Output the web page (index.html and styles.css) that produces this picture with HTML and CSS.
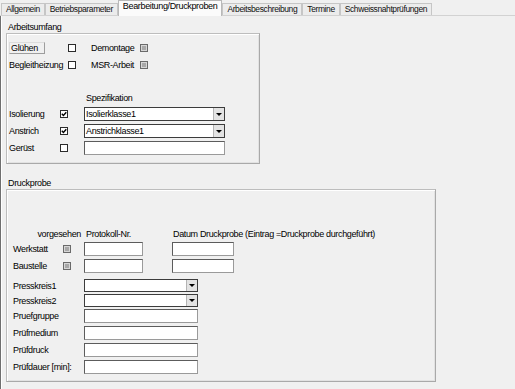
FILE: index.html
```html
<!DOCTYPE html>
<html lang="de">
<head>
<meta charset="utf-8">
<title>Bearbeitung/Druckproben</title>
<link rel="stylesheet" href="styles.css">
</head>
<body>
<div class="win">
  <div class="tabs">
    <div class="tab">Allgemein</div>
    <div class="tab">Betriebsparameter</div>
    <div class="tab sel">Bearbeitung/Druckproben</div>
    <div class="tab">Arbeitsbeschreibung</div>
    <div class="tab">Termine</div>
    <div class="tab">Schweissnahtprüfungen</div>
  </div>
  <div class="panel">
    <div class="glabel first">Arbeitsumfang</div>
    <div class="group g1">
      <div class="opts">
        <div class="lbl boxed">Glühen</div>
        <span class="cb"></span>
        <div class="lbl">Demontage</div>
        <span class="cb dis"></span>
        <div class="lbl">Begleitheizung</div>
        <span class="cb"></span>
        <div class="lbl">MSR-Arbeit</div>
        <span class="cb dis"></span>
      </div>
      <div class="spechead">Spezifikation</div>
      <div class="spec">
        <div class="lbl">Isolierung</div>
        <span class="cb on"><svg viewBox="0 0 6 6"><path d="M0.8 2.8 L2.4 4.4 L5.3 1.2" fill="none" stroke="#000" stroke-width="1.4"/></svg></span>
        <div class="combo"><span class="val">Isolierklasse1</span><span class="btn"></span></div>
        <div class="lbl">Anstrich</div>
        <span class="cb on"><svg viewBox="0 0 6 6"><path d="M0.8 2.8 L2.4 4.4 L5.3 1.2" fill="none" stroke="#000" stroke-width="1.4"/></svg></span>
        <div class="combo"><span class="val">Anstrichklasse1</span><span class="btn"></span></div>
        <div class="lbl">Gerüst</div>
        <span class="cb"></span>
        <div class="tb"></div>
      </div>
    </div>
    <div class="glabel second">Druckprobe</div>
    <div class="group g2">
      <div class="dp">
        <div class="lbl vg">vorgesehen</div>
        <div class="lbl pn">Protokoll-Nr.</div>
        <div class="lbl dt">Datum Druckprobe (Eintrag =Druckprobe durchgeführt)</div>
        <div class="lbl">Werkstatt</div>
        <span class="cb dis"></span>
        <div class="tb proto"></div>
        <div class="tb date"></div>
        <div class="lbl">Baustelle</div>
        <span class="cb dis"></span>
        <div class="tb proto"></div>
        <div class="tb date"></div>
      </div>
      <div class="frow cmbrow first"><div class="lbl">Presskreis1</div><div class="combo"><span class="val"></span><span class="btn"></span></div></div>
      <div class="frow cmbrow"><div class="lbl">Presskreis2</div><div class="combo"><span class="val"></span><span class="btn"></span></div></div>
      <div class="frow"><div class="lbl">Pruefgruppe</div><div class="tb"></div></div>
      <div class="frow"><div class="lbl">Prüfmedium</div><div class="tb"></div></div>
      <div class="frow"><div class="lbl">Prüfdruck</div><div class="tb"></div></div>
      <div class="frow"><div class="lbl">Prüfdauer [min]:</div><div class="tb"></div></div>
    </div>
  </div>
</div>
</body>
</html>
```

FILE: styles.css
```css
* { box-sizing: border-box; }
html, body { margin: 0; padding: 0; }
body {
  background: #f0f0f0;
  font-family: "Liberation Sans", Arial, sans-serif;
  font-size: 9px;
  letter-spacing: -0.35px;
  color: #000;
  width: 515px;
  height: 389px;
  overflow: hidden;
}
.win { width: 515px; height: 389px; display: flex; flex-direction: column; }

/* tabs */
.tabs {
  display: flex;
  align-items: flex-end;
  height: 16px;
  border-bottom: 1px solid #d2d2d2;
  padding-left: 1px;
}
.tab {
  height: 12px;
  padding: 0 4px;
  border: 1px solid #c6c6c6;
  border-bottom: 0;
  background: #ececec;
  font-size: 8.5px;
  letter-spacing: -0.4px;
  line-height: 11px;
  white-space: nowrap;
  color: #111;
}
.tab.sel {
  height: 16px;
  margin-bottom: -1px;
  background: #fbfbfb;
  font-size: 9px;
  letter-spacing: -0.35px;
  line-height: 11px;
  padding: 0 4px;
  border-color: #b9b9b9;
  color: #000;
}

/* panel */
.panel {
  flex: 1;
  border-left: 1px solid #6f6f6f;
  box-shadow: inset 1px 0 0 #fff;
  padding-left: 5px;
}
.glabel { line-height: 11px; padding-left: 2px; }
.glabel.first { margin-top: 6px; }
.glabel.second { margin-top: 14px; }

.group {
  border: 1px solid #bdbdbd;
  border-right-color: #a9a9a9;
  border-bottom-color: #a9a9a9;
  box-shadow: inset 1px 1px 0 #fff, inset -1px -1px 0 #e2e2e2;
}
.g1 { width: 254px; padding: 8px 0 8px 2px; }
.g2 { width: 430px; padding: 38px 0 7px 6px; }

.lbl { line-height: 12px; white-space: nowrap; }

/* checkboxes */
.cb {
  display: block;
  width: 8px;
  height: 8px;
  border: 1px solid #2b2b2b;
  background: #fff;
}
.cb.dis {
  background: #a8a8a8;
  border-color: #6a6a6a;
  box-shadow: inset 0 0 0 1px #d6d6d6;
}
.cb svg { display: block; width: 6px; height: 6px; }

/* inputs */
.tb {
  background: #fff;
  height: 14px;
  border: 1px solid;
  border-color: #5c5c5c #9a9a9a #9a9a9a #5c5c5c;
}
.combo {
  display: flex;
  background: #fff;
  height: 14px;
  border: 1px solid #3c3c3c;
}
.combo .val {
  flex: 1;
  line-height: 12px;
  padding-left: 1px;
  white-space: nowrap;
  overflow: hidden;
}
.combo .btn {
  width: 11px;
  background: #e3e3e3;
  border-left: 1px solid #b4b4b4;
  display: flex;
  align-items: center;
  justify-content: center;
}
.combo .btn::after {
  content: "";
  border-top: 3px solid #000;
  border-left: 3px solid transparent;
  border-right: 3px solid transparent;
}

/* Arbeitsumfang */
.opts {
  display: grid;
  grid-template-columns: 59px 23px 49px 8px;
  grid-auto-rows: 12px;
  row-gap: 5px;
  align-items: center;
}
.boxed {
  width: 36px;
  height: 12px;
  padding-left: 1px;
  border: 1px solid;
  border-color: #dcdcdc #9d9d9d #9d9d9d #dcdcdc;
  line-height: 10px;
}
.spechead { margin: 22px 0 0 77px; }
.spec {
  display: grid;
  grid-template-columns: 51px 24px 141px;
  grid-auto-rows: 14px;
  row-gap: 3px;
  align-items: center;
  margin-top: 4px;
}

/* Druckprobe */
.dp {
  display: grid;
  grid-template-columns: 50px 21px 88px 62px;
  grid-template-rows: 11px 14px 14px;
  row-gap: 3px;
  align-items: center;
}
.dp .vg { grid-column: 1 / 3; text-align: right; padding-right: 3px; }
.dp .pn { padding-left: 2px; }
.dp .dt { padding-left: 1px; }
.dp .proto { width: 59px; }

.frow { display: flex; align-items: center; height: 14px; margin-top: 3px; }
.frow.cmbrow { height: 13px; }
.frow.first { margin-top: 6px; }
.cmbrow + .frow { margin-top: 2px; }
.frow .lbl { width: 71px; }
.frow .tb, .frow .combo { width: 114px; height: 100%; }
```
